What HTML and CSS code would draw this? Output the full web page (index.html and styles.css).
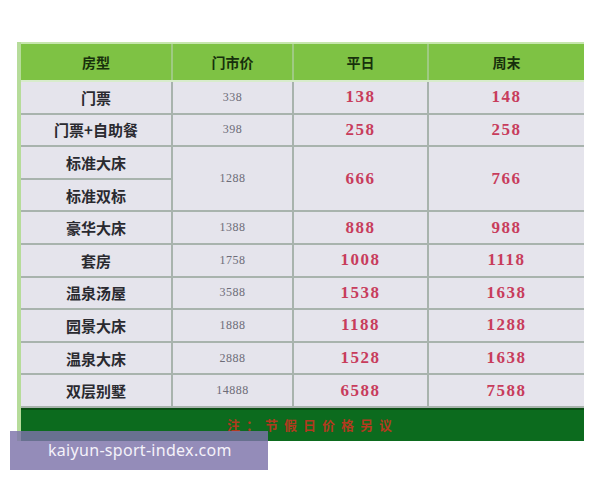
FILE: index.html
```html
<!DOCTYPE html>
<html lang="zh">
<head>
<meta charset="utf-8">
<title>价格表</title>
<link rel="stylesheet" href="styles.css">
</head>
<body>
<div class="sheet">
  <table class="prices">
    <colgroup>
      <col class="c1"><col class="c2"><col class="c3"><col class="c4">
    </colgroup>
    <thead>
      <tr><th>房型</th><th>门市价</th><th>平日</th><th>周末</th></tr>
    </thead>
    <tbody>
      <tr><td class="name">门票</td><td class="rack">338</td><td class="price">138</td><td class="price">148</td></tr>
      <tr><td class="name">门票+自助餐</td><td class="rack">398</td><td class="price">258</td><td class="price">258</td></tr>
      <tr><td class="name">标准大床</td><td class="rack" rowspan="2">1288</td><td class="price" rowspan="2">666</td><td class="price" rowspan="2">766</td></tr>
      <tr><td class="name">标准双标</td></tr>
      <tr><td class="name">豪华大床</td><td class="rack">1388</td><td class="price">888</td><td class="price">988</td></tr>
      <tr><td class="name">套房</td><td class="rack">1758</td><td class="price">1008</td><td class="price">1118</td></tr>
      <tr><td class="name">温泉汤屋</td><td class="rack">3588</td><td class="price">1538</td><td class="price">1638</td></tr>
      <tr><td class="name">园景大床</td><td class="rack">1888</td><td class="price">1188</td><td class="price">1288</td></tr>
      <tr><td class="name">温泉大床</td><td class="rack">2888</td><td class="price">1528</td><td class="price">1638</td></tr>
      <tr><td class="name">双层别墅</td><td class="rack">14888</td><td class="price">6588</td><td class="price">7588</td></tr>
    </tbody>
  </table>
  <div class="footer">注：节假日价格另议</div>
</div>
<div class="watermark">kaiyun-sport-index.com</div>
</body>
</html>
```

FILE: styles.css
```css
html, body {
  margin: 0;
  padding: 0;
  background: #ffffff;
}

body {
  width: 600px;
  height: 480px;
  position: relative;
  overflow: hidden;
  font-family: "Liberation Serif", "Noto Sans CJK SC", serif;
}

.sheet {
  margin: 42px 0 0 17px;
  width: 567px;
  border-left: 4px solid #b6dc9a;
  box-sizing: border-box;
}

.prices {
  width: 100%;
  border-collapse: collapse;
  table-layout: fixed;
}

.c1 { width: 151px; }
.c2 { width: 121px; }
.c3 { width: 135px; }
.c4 { width: 156px; }

.prices th {
  height: 36px;
  padding: 0;
  background: #7ec244;
  color: #17300c;
  font-family: "Noto Sans CJK SC", sans-serif;
  font-weight: 700;
  font-size: 14px;
  border-left: 2px solid #9fca82;
  border-top: 2px solid #c6e6ad;
  border-bottom: 2px solid #d8eccc;
}

.prices th:first-child { border-left: none; }

.prices td {
  height: 30.6px;
  padding: 0;
  background: #e5e4ec;
  text-align: center;
  border: 2px solid #a8b3ad;
  border-top: none;
}

.prices td:first-child { border-left: none; }
.prices td:last-child { border-right: none; }

.name {
  font-family: "Noto Sans CJK SC", sans-serif;
  font-weight: 700;
  font-size: 15px;
  color: #2a2a30;
}

.rack {
  font-size: 12px;
  color: #6d6c78;
  letter-spacing: 0.5px;
}

.price {
  font-weight: 700;
  font-size: 17px;
  color: #c83c5c;
  letter-spacing: 1.5px;
}

.footer {
  height: 33px;
  background: #0c6b1e;
  border-top: 2px solid #0a4f14;
  box-sizing: border-box;
  color: #b23a1f;
  font-family: "Noto Sans CJK SC", sans-serif;
  font-size: 13px;
  font-weight: 700;
  letter-spacing: 6px;
  line-height: 30px;
  text-align: center;
  padding-left: 20px;
}

.watermark {
  position: absolute;
  left: 10px;
  top: 431px;
  width: 258px;
  height: 39px;
  background: rgba(125, 115, 170, 0.82);
  color: #f4f2fa;
  font-family: "Noto Sans", "DejaVu Sans", sans-serif;
  font-size: 16px;
  letter-spacing: 0.3px;
  line-height: 39px;
  box-sizing: border-box;
  padding-left: 38px;
}
```
